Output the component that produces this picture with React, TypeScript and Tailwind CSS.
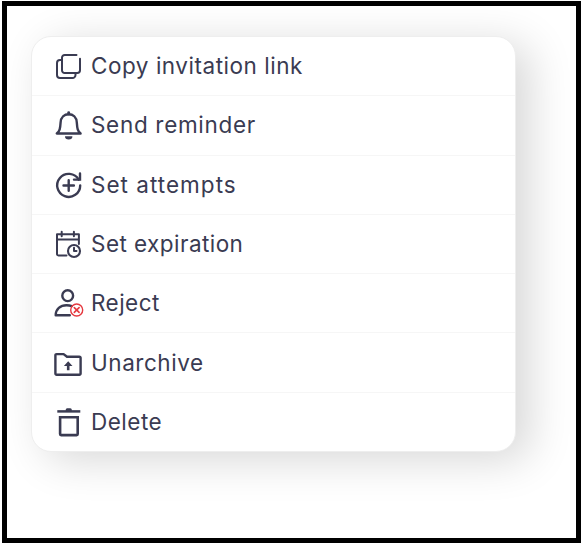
import type { ReactNode } from "react"
import { clsx } from "clsx"

interface MenuItem {
    label: string
    tracking: string
    icon: ReactNode
}

const items: MenuItem[] = [
    {
        label: "Copy invitation link",
        tracking: "tracking-[0.53px]",
        icon: (
            <>
                <path d="M24.5 5H12.7A2.7 2.7 0 0 0 10 7.7V20.3A2.7 2.7 0 0 0 12.7 23H25.3A2.7 2.7 0 0 0 28 20.3V8.8" />
                <path d="M10 10H8A3 3 0 0 0 5 13V25A3 3 0 0 0 8 28H20.5A3 3 0 0 0 23.5 25V23" />
            </>
        )
    },
    {
        label: "Send reminder",
        tracking: "tracking-[0.68px]",
        icon: (
            <>
                <path strokeWidth="2.4" d="M4.8 24.5H28.6C25.6 22 25.2 19.5 24.8 13.5C24.5 8 21 5.2 16.7 5.2S8.9 8 8.6 13.5C8.2 19.5 7.8 22 4.8 24.5Z" />
                <path strokeWidth="2.8" d="M16.7 3.6V5" />
                <path fill="currentColor" stroke="none" d="M13 27.2H20.4A3.7 3.3 0 0 1 13 27.2Z" />
            </>
        )
    },
    {
        label: "Set attempts",
        tracking: "tracking-[1.02px]",
        icon: (
            <>
                <path strokeWidth="2.4" d="M28.2 16.4A11.5 11.5 0 1 1 26.7 10.7" />
                <path strokeWidth="2.4" strokeLinejoin="miter" d="M28 4.5V10.6H22" />
                <path strokeWidth="2.4" d="M16.7 11.3V21.7M11.5 16.5H21.9" />
            </>
        )
    },
    {
        label: "Set expiration",
        tracking: "tracking-[0.45px]",
        icon: (
            <>
                <path d="M14.5 27.4H6.5A1.5 1.5 0 0 1 5 25.9V6.3H26.9V16M5 11.5H26.9" />
                <path d="M9.7 3.7V8.3M21.9 3.7V8.3" />
                <circle cx="22" cy="23" r="6" strokeWidth="2.1" />
                <path d="M22 19.7V23H24.5" />
            </>
        )
    },
    {
        label: "Reject",
        tracking: "tracking-[0.45px]",
        icon: (
            <>
                <circle cx="15.7" cy="8.7" r="5.4" strokeWidth="2.4" />
                <path strokeWidth="2.4" d="M17.8 28.3H3.7C3.7 22 8.4 18.2 14.5 18.2C16.7 18.2 18.3 18.5 19.8 19.1" />
                <g className="text-[#e5383f]" stroke="currentColor" strokeWidth="1.4">
                    <circle cx="24.7" cy="23" r="6" />
                    <path d="M22.3 20.6L27.1 25.4M27.1 20.6L22.3 25.4" strokeWidth="1.6" />
                </g>
            </>
        )
    },
    {
        label: "Unarchive",
        tracking: "tracking-[0.55px]",
        icon: (
            <>
                <path strokeWidth="2.4" d="M3.4 26.6V8.3A1.2 1.2 0 0 1 4.6 7.1H11.6L15 9.8H27.3A1.3 1.3 0 0 1 28.6 11.1V26.6A1.2 1.2 0 0 1 27.4 27.8H4.6A1.2 1.2 0 0 1 3.4 26.6Z" />
                <path fill="currentColor" stroke="none" d="M16.2 14.2L20.5 18.9H17.5V23.3H14.9V18.9H11.9Z" />
            </>
        )
    },
    {
        label: "Delete",
        tracking: "tracking-[0.5px]",
        icon: (
            <>
                <path strokeWidth="2.5" strokeLinecap="butt" d="M5.3 5.4H28.3" />
                <path fill="currentColor" stroke="none" d="M13.7 5.5V3.8A1.5 1.5 0 0 1 15.2 2.3H18.3A1.5 1.5 0 0 1 19.8 3.8V5.5Z" />
                <path strokeWidth="2.6" strokeLinejoin="miter" d="M8.1 11.2H25.7V28.1A1 1 0 0 1 24.7 29.1H9.1A1 1 0 0 1 8.1 28.1Z" />
            </>
        )
    }
]

function MenuRow({ item, last }: { item: MenuItem; last: boolean }) {
    return (
        <button
            type="button"
            className={clsx(
                "flex w-full flex-1 items-center gap-[7px] pl-5 text-left",
                !last && "border-b border-[#f6f6f6]"
            )}
        >
            <svg
                viewBox="0 0 32 32"
                className="h-8 w-8 shrink-0"
                fill="none"
                stroke="currentColor"
                strokeWidth="2"
                strokeLinecap="round"
                strokeLinejoin="round"
            >
                {item.icon}
            </svg>
            <span className={clsx("text-[22.5px] leading-8 whitespace-nowrap", item.tracking)}>{item.label}</span>
        </button>
    )
}

export default function App() {
    return (
        <div className="h-[544px] w-[581px] bg-white pt-px pb-px pl-[2px]">
            <div className="h-full overflow-hidden border-[5px] border-black bg-white pt-[30px] pl-6">
                {/* Invitation actions menu */}
                <div className="flex h-[416px] w-[485px] flex-col rounded-[20px] border border-[#eeeeee] bg-white font-['Inter',sans-serif] text-[#3a3b52] shadow-[14px_8px_44px_rgba(0,0,0,0.16)]">
                    {items.map((item, i) => (
                        <MenuRow key={item.label} item={item} last={i === items.length - 1} />
                    ))}
                </div>
            </div>
        </div>
    )
}
